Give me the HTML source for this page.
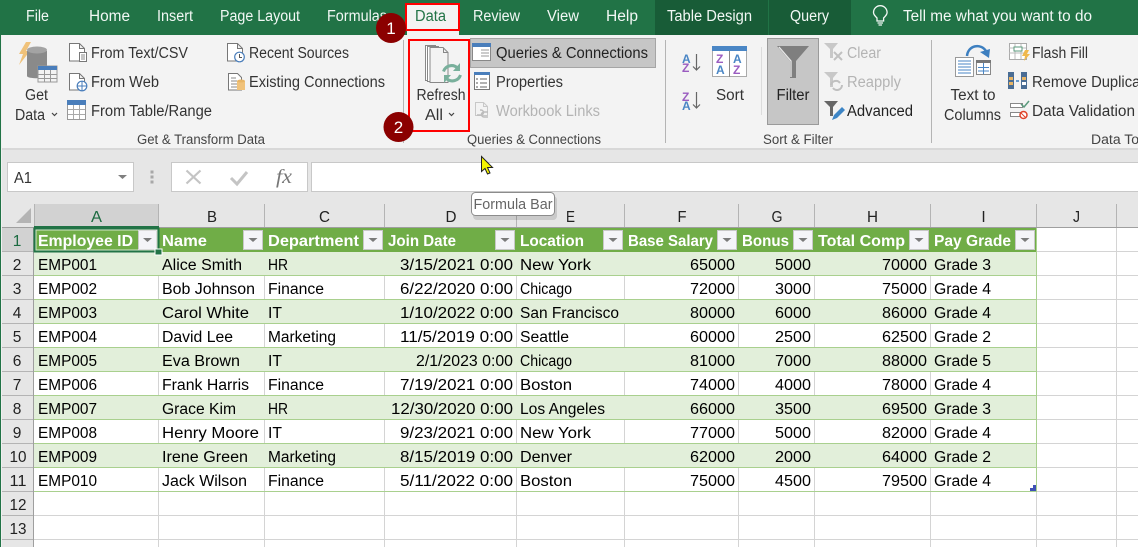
<!DOCTYPE html>
<html lang="en"><head><meta charset="utf-8"><title>Excel Data tab</title>
<style>
html,body{margin:0;padding:0;background:#fff;width:1138px;height:547px;overflow:hidden}
svg{display:block}
text{font-family:"Liberation Sans",Arial,sans-serif;font-size:15.5px;fill:#000}
.t{fill:#f2f8f5}
.r{fill:#333}
.d{fill:#b4b4b4}
.g{fill:#444;font-size:13.5px}
.h{fill:#222}
.w{fill:#fff;font-weight:bold}
.e{text-anchor:end}
.m{text-anchor:middle}
.hl{stroke:#d4d4d4;stroke-width:1;fill:none}
</style></head><body>
<svg width="1138" height="547" viewBox="0 0 1138 547" xmlns="http://www.w3.org/2000/svg">
<!-- backgrounds -->
<rect width="1138" height="547" fill="#fff"/>
<rect width="1138" height="35" fill="#217346"/>
<rect y="35" width="1138" height="113" fill="#f3f3f3"/>
<rect y="148" width="1138" height="2" fill="#d8d8d8"/>
<rect y="150" width="1138" height="54" fill="#e6e6e6"/>
<rect x="655" width="113" height="35" fill="#185c37"/>
<rect x="769" width="82" height="35" fill="#185c37"/>
<rect x="407" y="3" width="52" height="33" fill="#f3f3f3"/>

<!-- tabs -->
<text class="t" x="26" y="21" lengthAdjust="spacingAndGlyphs" textLength="23">File</text>
<text class="t" x="89" y="21" lengthAdjust="spacingAndGlyphs" textLength="41">Home</text>
<text class="t" x="157" y="21" lengthAdjust="spacingAndGlyphs" textLength="36">Insert</text>
<text class="t" x="220" y="21" lengthAdjust="spacingAndGlyphs" textLength="80">Page Layout</text>
<text class="t" x="327" y="21" lengthAdjust="spacingAndGlyphs" textLength="60">Formulas</text>
<text x="415" y="21" lengthAdjust="spacingAndGlyphs" textLength="31" style="fill:#217346">Data</text>
<text class="t" x="473" y="21" lengthAdjust="spacingAndGlyphs" textLength="47">Review</text>
<text class="t" x="547" y="21" lengthAdjust="spacingAndGlyphs" textLength="32">View</text>
<text class="t" x="606" y="21" lengthAdjust="spacingAndGlyphs" textLength="32">Help</text>
<text class="t" x="667" y="21" lengthAdjust="spacingAndGlyphs" textLength="85">Table Design</text>
<text class="t" x="790" y="21" lengthAdjust="spacingAndGlyphs" textLength="39">Query</text>
<text class="t" x="903" y="21" lengthAdjust="spacingAndGlyphs" textLength="189">Tell me what you want to do</text>
<!-- bulb -->
<g fill="none" stroke="#f2f8f5" stroke-width="1.3"><path d="M877 18c-2-2-3.500-3.500-3.500-5.500a6.800 6.800 0 0 1 13.600 0c0 2-1.500 3.500-3.500 5.500v3h-6.600z"/><path d="M877.500 23h5.500M878.500 25h3.500"/></g>

<!-- ribbon separators -->
<path d="M403.500 40v103M665.500 40v103M931.500 40v103" stroke="#b4b4b4"/>
<path d="M761.500 47v68" stroke="#dcdcdc"/>

<!-- Get Data icon -->
<path d="M26 42h5l-5 9h4l-11 14 4-11h-4z" fill="#f0c27a"/>
<path d="M27 51v25c0 3 20 3 20 0V51z" fill="#8a8a8a"/>
<ellipse cx="37" cy="50" rx="10" ry="3.500" fill="#a3a3a3"/>
<rect x="38" y="66" width="19" height="16" fill="#f3f3f3" stroke="#999"/>
<rect x="38" y="66" width="19" height="4" fill="#4a7ebb"/>
<path d="M38 74.500h19M38 78.500h19M44.500 70v12M50.500 70v12" stroke="#999"/>
<text class="r m" x="36.500" y="100" lengthAdjust="spacingAndGlyphs" textLength="23">Get</text>
<text class="r" x="15" y="120" lengthAdjust="spacingAndGlyphs" textLength="30">Data</text>
<path d="M52 113l2.500 2.500 2.500-2.500" fill="none" stroke="#444" stroke-width="1.200"/>

<!-- From Text -->
<path d="M69.500 43.500h10l5 5v12.500h-15z M79.500 43.500v5h5" fill="#fff" stroke="#777"/>
<rect x="79.500" y="52.500" width="7" height="9" fill="#fff" stroke="#777"/><path d="M81 55h4M81 57h4M81 59h4" stroke="#888"/>
<text class="r" x="91" y="58" lengthAdjust="spacingAndGlyphs" textLength="97">From Text/CSV</text>
<!-- From Web -->
<path d="M69.500 73.500h10l5 5v11.500h-15z M79.500 73.500v5h5" fill="#fff" stroke="#777"/>
<circle cx="82" cy="86" r="4.800" fill="#fff" stroke="#4a7ebb" stroke-width="1.200"/><path d="M77 86h10M82 81v10" stroke="#4a7ebb"/>
<text class="r" x="91" y="87" lengthAdjust="spacingAndGlyphs" textLength="68">From Web</text>
<!-- From Table -->
<rect x="67.500" y="100.500" width="18" height="19" fill="#fff" stroke="#999"/>
<rect x="67" y="100" width="19" height="5" fill="#4a7ebb"/>
<path d="M68 109.500h17M68 114.500h17M73.500 105v14M79.500 105v14" stroke="#aaa"/>
<text class="r" x="91" y="116" lengthAdjust="spacingAndGlyphs" textLength="121">From Table/Range</text>
<!-- Recent -->
<path d="M227.500 43.500h10l5 5v12.500h-15z M237.500 43.500v5h5" fill="#fff" stroke="#777"/>
<circle cx="239.500" cy="57" r="4.800" fill="#fff" stroke="#4a7ebb" stroke-width="1.200"/><path d="M239.500 54v3.500h2.500" fill="none" stroke="#555"/>
<text class="r" x="249" y="58" lengthAdjust="spacingAndGlyphs" textLength="100">Recent Sources</text>
<!-- Existing -->
<path d="M228.500 73.500h9l4 4v12.500h-13z" fill="#fff" stroke="#777"/>
<path d="M231 78h5M231 81h6M231 84h6M231 87h6" stroke="#888"/>
<path d="M237 81h8v9h-8z" fill="#f0c27a"/><ellipse cx="241" cy="81" rx="4" ry="1.500" fill="#e8b565"/>
<text class="r" x="249" y="87" lengthAdjust="spacingAndGlyphs" textLength="136">Existing Connections</text>
<text class="g" x="137" y="144" lengthAdjust="spacingAndGlyphs" textLength="128">Get &amp; Transform Data</text>

<!-- Refresh All -->
<path d="M425.500 45.500h10v35h-10z" fill="#fff" stroke="#888"/>
<path d="M427.500 46.500h11v35h-11z" fill="#fff" stroke="#888"/>
<path d="M430 47.500h13l5 5v30h-18z" fill="#f3f3f3" stroke="#888"/>
<path d="M443.500 47.500v5h5" fill="none" stroke="#888"/>
<path d="M443.500 71.500a8.500 8.500 0 0 1 14-3.500" fill="none" stroke="#79b09c" stroke-width="3"/>
<path d="M460 63v8h-7z" fill="#79b09c"/>
<path d="M460.500 75a8.500 8.500 0 0 1-14 3.500" fill="none" stroke="#79b09c" stroke-width="3"/>
<path d="M444 83v-8h7z" fill="#79b09c"/>
<text class="r m" x="441" y="100" lengthAdjust="spacingAndGlyphs" textLength="49">Refresh</text>
<text class="r" x="425" y="120" lengthAdjust="spacingAndGlyphs" textLength="18">All</text>
<path d="M449 113l2.500 2.500 2.500-2.500" fill="none" stroke="#444" stroke-width="1.200"/>

<!-- Queries & Connections -->
<rect x="470.500" y="38.500" width="185" height="29" fill="#c6c6c6" stroke="#a5a5a5"/>
<rect x="472.500" y="43.500" width="18" height="17" fill="#fff" stroke="#888"/>
<rect x="472" y="43" width="19" height="4" fill="#4a7ebb"/>
<path d="M481 50h8M481 53h8M481 56h8" stroke="#999"/>
<text class="h" x="496" y="58" lengthAdjust="spacingAndGlyphs" textLength="152">Queries &amp; Connections</text>
<rect x="474.500" y="73.500" width="15" height="16" fill="#fff" stroke="#777"/>
<rect x="474" y="72" width="16" height="3" fill="#4a7ebb"/>
<path d="M480 79h7M480 83h7M480 87h7" stroke="#666"/><path d="M476 79h2M476 83h2M476 87h2" stroke="#555"/>
<text class="r" x="496" y="87" lengthAdjust="spacingAndGlyphs" textLength="67">Properties</text>
<path d="M475.500 102.500h8l4 4v9h-12z M483.500 102.500v4h4" fill="#f3f3f3" stroke="#c8c8c8"/>
<path d="M477 115h4a2.500 2.500 0 0 0 0-5h-1M488 112h-4a2.500 2.500 0 0 0 0 5h4" fill="none" stroke="#bcbcbc" stroke-width="1.500"/>
<text class="d" x="496" y="116" lengthAdjust="spacingAndGlyphs" textLength="104">Workbook Links</text>
<text class="g" x="467" y="144" lengthAdjust="spacingAndGlyphs" textLength="134">Queries &amp; Connections</text>

<!-- Sort icons -->
<text x="682" y="63" textLength="11" style="font-size:12px;font-weight:bold;fill:#4a86c5">A</text>
<text x="682" y="72" textLength="11" style="font-size:12px;font-weight:bold;fill:#9a5cc0">Z</text>
<path d="M696.500 54v16m-3.500-3.500l3.500 3.500 3.500-3.500" fill="none" stroke="#666" stroke-width="1.200"/>
<text x="682" y="101" textLength="11" style="font-size:12px;font-weight:bold;fill:#9a5cc0">Z</text>
<text x="682" y="110" textLength="11" style="font-size:12px;font-weight:bold;fill:#4a86c5">A</text>
<path d="M696.500 92v16m-3.500-3.500l3.500 3.500 3.500-3.500" fill="none" stroke="#666" stroke-width="1.200"/>
<rect x="712.500" y="46.500" width="34" height="30" fill="#fff" stroke="#aaa"/>
<rect x="712" y="46" width="35" height="5" fill="#4a86c5"/>
<path d="M729.500 51v26" stroke="#888"/>
<text x="716" y="63" textLength="10" style="font-size:12px;font-weight:bold;fill:#9a5cc0">Z</text>
<text x="716" y="74" textLength="10" style="font-size:12px;font-weight:bold;fill:#4a86c5">A</text>
<text x="733" y="63" textLength="10" style="font-size:12px;font-weight:bold;fill:#4a86c5">A</text>
<text x="733" y="74" textLength="10" style="font-size:12px;font-weight:bold;fill:#9a5cc0">Z</text>
<text class="r" x="716" y="100" lengthAdjust="spacingAndGlyphs" textLength="28">Sort</text>

<!-- Filter -->
<rect x="767.500" y="38.500" width="51" height="86" fill="#c6c6c6" stroke="#9a9a9a"/>
<path d="M777 46h32l-13 15v17h-6V61z" fill="#7f7f7f"/>
<path d="M779 47l12 14v16" fill="none" stroke="#e8e8e8" stroke-width="1.300"/>
<text class="h m" x="793" y="100" lengthAdjust="spacingAndGlyphs" textLength="33">Filter</text>
<!-- Clear -->
<path d="M824 43h14l-5 6v9h-3v-9z" fill="#c8c8c8"/><path d="M834 52l8 8m0-8l-8 8" stroke="#c0c0c0" stroke-width="2"/>
<text class="d" x="847" y="58" lengthAdjust="spacingAndGlyphs" textLength="34">Clear</text>
<!-- Reapply -->
<path d="M824 72h14l-5 6v9h-3v-9z" fill="#c8c8c8"/>
<path d="M831 85a5 5 0 0 1 9-2M842 85a5 5 0 0 1-9 3" fill="none" stroke="#c0c0c0" stroke-width="2"/>
<text class="d" x="847" y="87" lengthAdjust="spacingAndGlyphs" textLength="54">Reapply</text>
<!-- Advanced -->
<path d="M824 101h14l-5 6v9h-3v-9z" fill="#666"/>
<path d="M832 120l2-5 8-8 3 3-8 8z" fill="#3d85c6"/>
<text class="h" x="847" y="116" lengthAdjust="spacingAndGlyphs" textLength="66">Advanced</text>
<text class="g" x="763" y="144" lengthAdjust="spacingAndGlyphs" textLength="70">Sort &amp; Filter</text>

<!-- Text to Columns -->
<rect x="955.500" y="57.500" width="18" height="19" fill="#fff" stroke="#999"/>
<path d="M958 61h13M958 64h13M958 67h13M958 70h13M958 73h13" stroke="#4a86c5"/>
<rect x="976.500" y="60.500" width="14" height="14" fill="#fff" stroke="#888"/>
<rect x="976" y="60" width="15" height="3" fill="#777"/>
<path d="M983.500 63v11M978 67.500h11M978 71h11" stroke="#4a86c5"/>
<path d="M967 56c1-11 14-13 19-5" fill="none" stroke="#3d7fc0" stroke-width="2.500"/>
<path d="M980 52l9 6 1-9z" fill="#3d7fc0"/>
<text class="r m" x="973" y="100" lengthAdjust="spacingAndGlyphs" textLength="45">Text to</text>
<text class="r m" x="972.500" y="120" lengthAdjust="spacingAndGlyphs" textLength="57">Columns</text>
<!-- Flash Fill -->
<rect x="1009.500" y="43.500" width="17" height="16" fill="#fff" stroke="#aaa"/>
<path d="M1009 48h17M1009 53h17M1015 44v15M1021 44v15" stroke="#bbb"/>
<rect x="1014" y="47" width="8" height="4" fill="#fff" stroke="#5b9a7d"/>
<path d="M1025 50h4l-2 4h3l-6 7 1-5h-3z" fill="#f0b84c"/>
<text class="r" x="1032" y="58" lengthAdjust="spacingAndGlyphs" textLength="56">Flash Fill</text>
<!-- Remove Duplicates -->
<rect x="1008" y="72" width="6" height="17" fill="#4a6d94"/><rect x="1009" y="77" width="4" height="3" fill="#e8b565"/><rect x="1009" y="82" width="4" height="3" fill="#e8b565"/>
<rect x="1021" y="72" width="6" height="17" fill="#4a6d94"/><rect x="1022" y="77" width="4" height="3" fill="#e8b565"/><rect x="1022" y="82" width="4" height="3" fill="#fff"/>
<path d="M1016 81h3" stroke="#3d7fc0" stroke-width="1.500"/>
<text class="r" x="1032" y="87" lengthAdjust="spacingAndGlyphs" textLength="128">Remove Duplicates</text>
<!-- Data Validation -->
<rect x="1010.500" y="103.500" width="12" height="4" fill="#fff" stroke="#888"/>
<rect x="1010.500" y="112.500" width="12" height="4" fill="#fff" stroke="#888"/>
<path d="M1021 104l3 3 5-6" fill="none" stroke="#5b9a7d" stroke-width="1.500"/>
<circle cx="1023.500" cy="115" r="3.500" fill="#fff" stroke="#e0442a" stroke-width="1.500"/><path d="M1021 113l5 5" stroke="#e0442a"/>
<text class="r" x="1032" y="116" lengthAdjust="spacingAndGlyphs" textLength="103">Data Validation</text>
<text class="g" x="1091" y="144" lengthAdjust="spacingAndGlyphs" textLength="66">Data Tools</text>

<!-- formula bar -->
<rect x="7.500" y="162.500" width="126" height="29" fill="#fff" stroke="#c8c8c8"/>
<text x="14" y="183" lengthAdjust="spacingAndGlyphs" textLength="18" style="fill:#333">A1</text>
<path d="M118 175h9l-4.500 4z" fill="#7f7f7f"/>
<path d="M152 170.500v3M152 175.500v3M152 180.500v3" stroke="#a8a8a8" stroke-width="3"/>
<rect x="171.500" y="162.500" width="136" height="29" fill="#fff" stroke="#c8c8c8"/>
<path d="M186.500 170.500l14 13m0-13l-14 13" stroke="#c4c4c4" stroke-width="2.200"/>
<path d="M231 178l6 6 10-12" fill="none" stroke="#c4c4c4" stroke-width="3"/>
<text x="276" y="183" style="font-family:'Liberation Serif',serif;font-style:italic;font-size:20px;fill:#777" lengthAdjust="spacingAndGlyphs" textLength="16">fx</text>
<rect x="311.500" y="162.500" width="830" height="29" fill="#fff" stroke="#c8c8c8"/>

<!-- column headers -->
<rect x="2" y="204" width="1136" height="24" fill="#e6e6e6"/>
<rect x="34" y="204" width="124" height="24" fill="#d2d2d2"/>
<path d="M31 208v15H16z" fill="#b4b4b4"/>
<path d="M34.500 204v23M158.500 204v23M264.500 204v23M384.500 204v23M516.500 204v23M624.500 204v23M738.500 204v23M814.500 204v23M930.500 204v23M1036.500 204v23M1116.500 204v23" stroke="#b4b4b4"/>
<rect x="2" y="227" width="1136" height="1" fill="#9f9f9f"/>
<rect x="34" y="226" width="125" height="2" fill="#217346"/>
<text class="m" x="96.500" y="222" style="fill:#1c6b41" lengthAdjust="spacingAndGlyphs" textLength="11">A</text>
<text class="m" x="212" y="222" style="fill:#222" lengthAdjust="spacingAndGlyphs" textLength="10">B</text>
<text class="m" x="324.500" y="222" style="fill:#222" lengthAdjust="spacingAndGlyphs" textLength="11">C</text>
<text class="m" x="451" y="222" style="fill:#222" lengthAdjust="spacingAndGlyphs" textLength="11">D</text>
<text class="m" x="570.500" y="222" style="fill:#222" lengthAdjust="spacingAndGlyphs" textLength="9">E</text>
<text class="m" x="682" y="222" style="fill:#222" lengthAdjust="spacingAndGlyphs" textLength="9">F</text>
<text class="m" x="777" y="222" style="fill:#222" lengthAdjust="spacingAndGlyphs" textLength="11">G</text>
<text class="m" x="872.500" y="222" style="fill:#222" lengthAdjust="spacingAndGlyphs" textLength="11">H</text>
<text class="m" x="983.500" y="222" style="fill:#222" textLength="3">I</text>
<text class="m" x="1076.500" y="222" style="fill:#222" lengthAdjust="spacingAndGlyphs" textLength="7">J</text>

<!-- row headers -->
<rect x="2" y="228" width="32" height="319" fill="#e6e6e6"/>
<rect x="2" y="228" width="32" height="24" fill="#d2d2d2"/>
<rect x="33" y="228" width="1" height="319" fill="#9f9f9f"/>
<path d="M2 251.500h31M2 275.500h31M2 299.500h31M2 323.500h31M2 347.500h31M2 371.500h31M2 395.500h31M2 419.500h31M2 443.500h31M2 467.500h31M2 491.500h31M2 515.500h31M2 539.500h31" stroke="#b4b4b4"/>
<rect x="0" y="35" width="1" height="512" fill="#217346"/>
<rect x="1" y="35" width="1" height="512" fill="#f0f0f0"/>
<g>
<text class="m" x="17" y="246" style="fill:#1c6b41">1</text>
<text class="m h" x="17" y="270">2</text><text class="m h" x="17" y="294">3</text><text class="m h" x="17" y="318">4</text><text class="m h" x="17" y="342">5</text><text class="m h" x="17" y="366">6</text><text class="m h" x="17" y="390">7</text><text class="m h" x="17" y="414">8</text><text class="m h" x="17" y="438">9</text><text class="m h" x="18" y="462" lengthAdjust="spacingAndGlyphs" textLength="17">10</text><text class="m h" x="18" y="486" lengthAdjust="spacingAndGlyphs" textLength="17">11</text><text class="m h" x="18" y="510" lengthAdjust="spacingAndGlyphs" textLength="17">12</text><text class="m h" x="18" y="534" lengthAdjust="spacingAndGlyphs" textLength="17">13</text>
</g>

<!-- grid lines -->
<path class="hl" d="M158.500 228V547M264.500 228V547M384.500 228V547M516.500 228V547M624.500 228V547M738.500 228V547M814.500 228V547M930.500 228V547M1036.500 228V547M1116.500 228V547"/>
<path class="hl" d="M34 251.500H1138M34 275.500H1138M34 299.500H1138M34 323.500H1138M34 347.500H1138M34 371.500H1138M34 395.500H1138M34 419.500H1138M34 443.500H1138M34 467.500H1138M34 491.500H1138M34 515.500H1138M34 539.500H1138"/>

<!-- table -->
<rect x="34" y="228" width="1002" height="24" fill="#70ad47"/>
<g fill="#e2efda">
<rect x="34" y="252" width="1002" height="24"/><rect x="34" y="300" width="1002" height="24"/><rect x="34" y="348" width="1002" height="24"/><rect x="34" y="396" width="1002" height="24"/><rect x="34" y="444" width="1002" height="24"/>
</g>
<path d="M34 275.500H1037M34 299.500H1037M34 323.500H1037M34 347.500H1037M34 371.500H1037M34 395.500H1037M34 419.500H1037M34 443.500H1037M34 467.500H1037M34 491.500H1037M1036.500 228V492" stroke="#a9d08e" fill="none"/>

<!-- header text -->
<text class="w" x="38" y="246" lengthAdjust="spacingAndGlyphs" textLength="95">Employee ID</text>
<text class="w" x="162" y="246" lengthAdjust="spacingAndGlyphs" textLength="45">Name</text>
<text class="w" x="268" y="246" lengthAdjust="spacingAndGlyphs" textLength="91">Department</text>
<text class="w" x="388" y="246" lengthAdjust="spacingAndGlyphs" textLength="68">Join Date</text>
<text class="w" x="520" y="246" lengthAdjust="spacingAndGlyphs" textLength="64">Location</text>
<text class="w" x="628" y="246" lengthAdjust="spacingAndGlyphs" textLength="85">Base Salary</text>
<text class="w" x="742" y="246" lengthAdjust="spacingAndGlyphs" textLength="47">Bonus</text>
<text class="w" x="818" y="246" lengthAdjust="spacingAndGlyphs" textLength="87">Total Comp</text>
<text class="w" x="934" y="246" lengthAdjust="spacingAndGlyphs" textLength="77">Pay Grade</text>
<!-- filter buttons -->
<g fill="#f4f4f8" stroke="#c8c8c8">
<rect x="138.500" y="230.500" width="18" height="19"/><rect x="243.500" y="230.500" width="19" height="19"/><rect x="363.500" y="230.500" width="19" height="19"/><rect x="495.500" y="230.500" width="19" height="19"/><rect x="603.500" y="230.500" width="19" height="19"/><rect x="717.500" y="230.500" width="19" height="19"/><rect x="793.500" y="230.500" width="19" height="19"/><rect x="909.500" y="230.500" width="19" height="19"/><rect x="1015.500" y="230.500" width="19" height="19"/>
</g>
<g fill="#7a7a7a">
<path d="M143 238h9l-4.500 4z"/><path d="M248.500 238h9l-4.500 4z"/><path d="M368.500 238h9l-4.500 4z"/><path d="M500.500 238h9l-4.500 4z"/><path d="M608.500 238h9l-4.500 4z"/><path d="M722.500 238h9l-4.500 4z"/><path d="M798.500 238h9l-4.500 4z"/><path d="M914.500 238h9l-4.500 4z"/><path d="M1020.500 238h9l-4.500 4z"/>
</g>

<!-- row 2 -->
<text x="38" y="270" lengthAdjust="spacingAndGlyphs" textLength="59">EMP001</text><text x="162" y="270" lengthAdjust="spacingAndGlyphs" textLength="80">Alice Smith</text><text x="268" y="270" lengthAdjust="spacingAndGlyphs" textLength="20">HR</text><text class="e" x="513" y="270" lengthAdjust="spacingAndGlyphs" textLength="113">3/15/2021 0:00</text><text x="520" y="270" lengthAdjust="spacingAndGlyphs" textLength="71">New York</text><text class="e" x="735" y="270" lengthAdjust="spacingAndGlyphs" textLength="45">65000</text><text class="e" x="811" y="270" lengthAdjust="spacingAndGlyphs" textLength="36">5000</text><text class="e" x="927" y="270" lengthAdjust="spacingAndGlyphs" textLength="45">70000</text><text x="934" y="270" lengthAdjust="spacingAndGlyphs" textLength="57">Grade 3</text>
<!-- row 3 -->
<text x="38" y="294" lengthAdjust="spacingAndGlyphs" textLength="59">EMP002</text><text x="162" y="294" lengthAdjust="spacingAndGlyphs" textLength="93">Bob Johnson</text><text x="268" y="294" lengthAdjust="spacingAndGlyphs" textLength="56">Finance</text><text class="e" x="513" y="294" lengthAdjust="spacingAndGlyphs" textLength="113">6/22/2020 0:00</text><text x="520" y="294" lengthAdjust="spacingAndGlyphs" textLength="52">Chicago</text><text class="e" x="735" y="294" lengthAdjust="spacingAndGlyphs" textLength="45">72000</text><text class="e" x="811" y="294" lengthAdjust="spacingAndGlyphs" textLength="36">3000</text><text class="e" x="927" y="294" lengthAdjust="spacingAndGlyphs" textLength="45">75000</text><text x="934" y="294" lengthAdjust="spacingAndGlyphs" textLength="57">Grade 4</text>
<!-- row 4 -->
<text x="38" y="318" lengthAdjust="spacingAndGlyphs" textLength="59">EMP003</text><text x="162" y="318" lengthAdjust="spacingAndGlyphs" textLength="87">Carol White</text><text x="268" y="318" lengthAdjust="spacingAndGlyphs" textLength="14">IT</text><text class="e" x="513" y="318" lengthAdjust="spacingAndGlyphs" textLength="113">1/10/2022 0:00</text><text x="520" y="318" lengthAdjust="spacingAndGlyphs" textLength="99">San Francisco</text><text class="e" x="735" y="318" lengthAdjust="spacingAndGlyphs" textLength="45">80000</text><text class="e" x="811" y="318" lengthAdjust="spacingAndGlyphs" textLength="36">6000</text><text class="e" x="927" y="318" lengthAdjust="spacingAndGlyphs" textLength="45">86000</text><text x="934" y="318" lengthAdjust="spacingAndGlyphs" textLength="57">Grade 4</text>
<!-- row 5 -->
<text x="38" y="342" lengthAdjust="spacingAndGlyphs" textLength="59">EMP004</text><text x="162" y="342" lengthAdjust="spacingAndGlyphs" textLength="71">David Lee</text><text x="268" y="342" lengthAdjust="spacingAndGlyphs" textLength="68">Marketing</text><text class="e" x="513" y="342" lengthAdjust="spacingAndGlyphs" textLength="113">11/5/2019 0:00</text><text x="520" y="342" lengthAdjust="spacingAndGlyphs" textLength="49">Seattle</text><text class="e" x="735" y="342" lengthAdjust="spacingAndGlyphs" textLength="45">60000</text><text class="e" x="811" y="342" lengthAdjust="spacingAndGlyphs" textLength="36">2500</text><text class="e" x="927" y="342" lengthAdjust="spacingAndGlyphs" textLength="45">62500</text><text x="934" y="342" lengthAdjust="spacingAndGlyphs" textLength="57">Grade 2</text>
<!-- row 6 -->
<text x="38" y="366" lengthAdjust="spacingAndGlyphs" textLength="59">EMP005</text><text x="162" y="366" lengthAdjust="spacingAndGlyphs" textLength="78">Eva Brown</text><text x="268" y="366" lengthAdjust="spacingAndGlyphs" textLength="14">IT</text><text class="e" x="513" y="366" lengthAdjust="spacingAndGlyphs" textLength="97">2/1/2023 0:00</text><text x="520" y="366" lengthAdjust="spacingAndGlyphs" textLength="52">Chicago</text><text class="e" x="735" y="366" lengthAdjust="spacingAndGlyphs" textLength="45">81000</text><text class="e" x="811" y="366" lengthAdjust="spacingAndGlyphs" textLength="36">7000</text><text class="e" x="927" y="366" lengthAdjust="spacingAndGlyphs" textLength="45">88000</text><text x="934" y="366" lengthAdjust="spacingAndGlyphs" textLength="57">Grade 5</text>
<!-- row 7 -->
<text x="38" y="390" lengthAdjust="spacingAndGlyphs" textLength="59">EMP006</text><text x="162" y="390" lengthAdjust="spacingAndGlyphs" textLength="87">Frank Harris</text><text x="268" y="390" lengthAdjust="spacingAndGlyphs" textLength="56">Finance</text><text class="e" x="513" y="390" lengthAdjust="spacingAndGlyphs" textLength="113">7/19/2021 0:00</text><text x="520" y="390" lengthAdjust="spacingAndGlyphs" textLength="52">Boston</text><text class="e" x="735" y="390" lengthAdjust="spacingAndGlyphs" textLength="45">74000</text><text class="e" x="811" y="390" lengthAdjust="spacingAndGlyphs" textLength="36">4000</text><text class="e" x="927" y="390" lengthAdjust="spacingAndGlyphs" textLength="45">78000</text><text x="934" y="390" lengthAdjust="spacingAndGlyphs" textLength="57">Grade 4</text>
<!-- row 8 -->
<text x="38" y="414" lengthAdjust="spacingAndGlyphs" textLength="59">EMP007</text><text x="162" y="414" lengthAdjust="spacingAndGlyphs" textLength="74">Grace Kim</text><text x="268" y="414" lengthAdjust="spacingAndGlyphs" textLength="20">HR</text><text class="e" x="513" y="414" lengthAdjust="spacingAndGlyphs" textLength="122">12/30/2020 0:00</text><text x="520" y="414" lengthAdjust="spacingAndGlyphs" textLength="85">Los Angeles</text><text class="e" x="735" y="414" lengthAdjust="spacingAndGlyphs" textLength="45">66000</text><text class="e" x="811" y="414" lengthAdjust="spacingAndGlyphs" textLength="36">3500</text><text class="e" x="927" y="414" lengthAdjust="spacingAndGlyphs" textLength="45">69500</text><text x="934" y="414" lengthAdjust="spacingAndGlyphs" textLength="57">Grade 3</text>
<!-- row 9 -->
<text x="38" y="438" lengthAdjust="spacingAndGlyphs" textLength="59">EMP008</text><text x="162" y="438" lengthAdjust="spacingAndGlyphs" textLength="97">Henry Moore</text><text x="268" y="438" lengthAdjust="spacingAndGlyphs" textLength="14">IT</text><text class="e" x="513" y="438" lengthAdjust="spacingAndGlyphs" textLength="113">9/23/2021 0:00</text><text x="520" y="438" lengthAdjust="spacingAndGlyphs" textLength="71">New York</text><text class="e" x="735" y="438" lengthAdjust="spacingAndGlyphs" textLength="45">77000</text><text class="e" x="811" y="438" lengthAdjust="spacingAndGlyphs" textLength="36">5000</text><text class="e" x="927" y="438" lengthAdjust="spacingAndGlyphs" textLength="45">82000</text><text x="934" y="438" lengthAdjust="spacingAndGlyphs" textLength="57">Grade 4</text>
<!-- row 10 -->
<text x="38" y="462" lengthAdjust="spacingAndGlyphs" textLength="59">EMP009</text><text x="162" y="462" lengthAdjust="spacingAndGlyphs" textLength="86">Irene Green</text><text x="268" y="462" lengthAdjust="spacingAndGlyphs" textLength="68">Marketing</text><text class="e" x="513" y="462" lengthAdjust="spacingAndGlyphs" textLength="113">8/15/2019 0:00</text><text x="520" y="462" lengthAdjust="spacingAndGlyphs" textLength="52">Denver</text><text class="e" x="735" y="462" lengthAdjust="spacingAndGlyphs" textLength="45">62000</text><text class="e" x="811" y="462" lengthAdjust="spacingAndGlyphs" textLength="36">2000</text><text class="e" x="927" y="462" lengthAdjust="spacingAndGlyphs" textLength="45">64000</text><text x="934" y="462" lengthAdjust="spacingAndGlyphs" textLength="57">Grade 2</text>
<!-- row 11 -->
<text x="38" y="486" lengthAdjust="spacingAndGlyphs" textLength="59">EMP010</text><text x="162" y="486" lengthAdjust="spacingAndGlyphs" textLength="85">Jack Wilson</text><text x="268" y="486" lengthAdjust="spacingAndGlyphs" textLength="56">Finance</text><text class="e" x="513" y="486" lengthAdjust="spacingAndGlyphs" textLength="113">5/11/2022 0:00</text><text x="520" y="486" lengthAdjust="spacingAndGlyphs" textLength="52">Boston</text><text class="e" x="735" y="486" lengthAdjust="spacingAndGlyphs" textLength="45">75000</text><text class="e" x="811" y="486" lengthAdjust="spacingAndGlyphs" textLength="36">4500</text><text class="e" x="927" y="486" lengthAdjust="spacingAndGlyphs" textLength="45">79500</text><text x="934" y="486" lengthAdjust="spacingAndGlyphs" textLength="57">Grade 4</text>

<!-- table resize handle -->
<path d="M1033 485h3v6h-6v-3h3z" fill="#3f51b5"/>

<!-- selection -->
<rect x="34.500" y="228.500" width="124" height="23" fill="none" stroke="#217346" stroke-width="2"/>
<rect x="36" y="230" width="121" height="20" fill="none" stroke="#fff" stroke-width="1" opacity=".7"/>
<rect x="155" y="249" width="7" height="6" fill="#217346" stroke="#fff"/>

<!-- tooltip -->
<rect x="473" y="196" width="84" height="24" rx="4" fill="#000" opacity=".12"/>
<rect x="471.500" y="192.500" width="83" height="23" rx="4" fill="#fff" stroke="#8c8c8c"/>
<text x="473.500" y="209" lengthAdjust="spacingAndGlyphs" textLength="79" style="fill:#666;font-size:14.500px">Formula Bar</text>
<!-- cursor -->
<path d="M481.500 156.500v15l3.500-3 2.500 5.500 2.500-1-2.500-5.500h5z" fill="#f5f500" stroke="#222" stroke-width="1"/>

<!-- annotations -->
<rect x="406" y="4" width="53" height="26" fill="none" stroke="#f00" stroke-width="2"/>
<rect x="409" y="40" width="60" height="91" fill="none" stroke="#f00" stroke-width="2"/>
<circle cx="391" cy="28" r="15" fill="#8b0000"/>
<text class="m" x="391" y="34" style="fill:#fff;font-size:17px">1</text>
<circle cx="398.500" cy="127" r="15" fill="#8b0000"/>
<text class="m" x="398.500" y="133" style="fill:#fff;font-size:17px">2</text>
</svg>
</body></html>
